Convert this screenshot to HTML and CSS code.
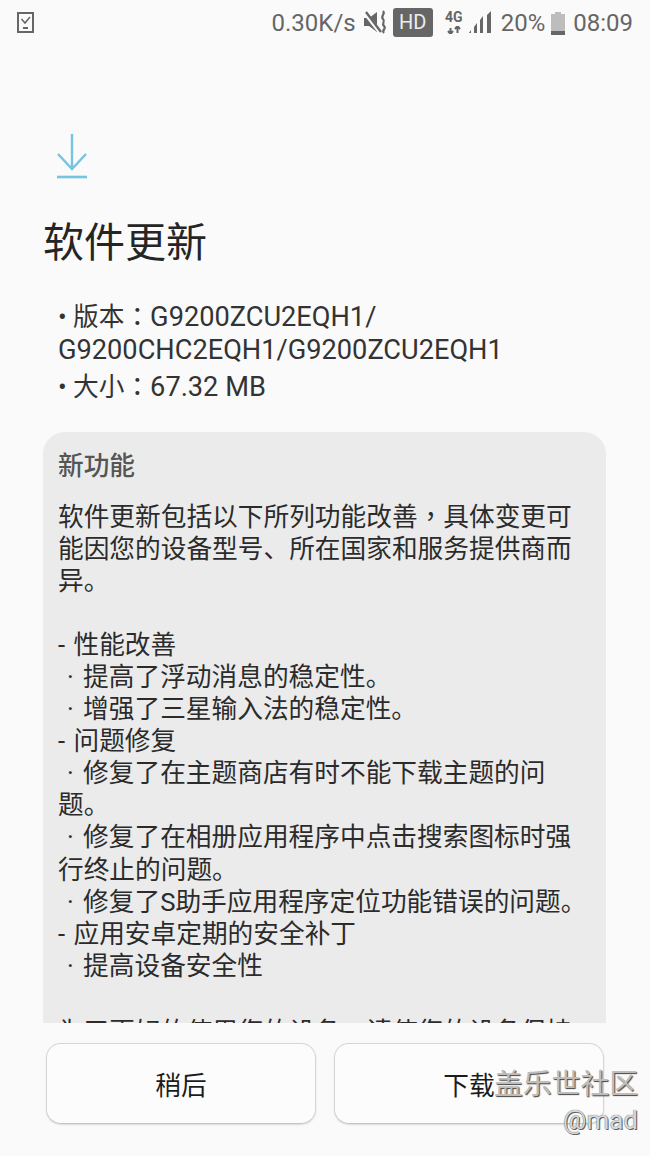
FILE: index.html
```html
<!DOCTYPE html>
<html lang="zh-CN">
<head>
<meta charset="utf-8">
<title>软件更新</title>
<link rel="stylesheet" href="styles.css">
</head>
<body>
<div class="screen">
  <header class="status">
    <svg class="st-left" width="18" height="22" viewBox="0 0 18 22"><rect x="1" y="1" width="15" height="19" fill="none" stroke="#666" stroke-width="2"/><path d="M4.500 7l3.500 4 5-6" fill="none" stroke="#666" stroke-width="1.500"/><rect x="6" y="15" width="5" height="2" fill="#666"/></svg>
    <div class="st-right">
      <span class="st-text speed">0.30K/s</span>
      <svg class="mute" width="24" height="25" viewBox="0 0 24 25"><path d="M0 8h5l8-6v20l-8-6H0z" fill="#666"/><path d="M1 3l14 18" stroke="#fafafa" stroke-width="4"/><path d="M2 2l15 20" stroke="#666" stroke-width="2.400"/><path d="M19 1c3 3-3 5 0 8s-2 4 1 7-3 4 0 7" fill="none" stroke="#666" stroke-width="2.200"/></svg>
      <span class="hd">HD</span>
      <span class="net"><span class="net-t">4G</span><svg width="14" height="8" viewBox="0 0 14 8"><path d="M3.500 8V2M1 5l2.500 3L6 5M10.500 0v7M8 3l2.500-3L13 3" fill="none" stroke="#666" stroke-width="2"/></svg></span>
      <svg class="signal" width="24" height="25" viewBox="0 0 24 25"><path d="M0 23l2-3v3zM5 23v-6l3-4v10zM11 23V10l3-4v17zM18 23V5l4-4v22z" fill="#666"/></svg>
      <span class="st-text pct">20%</span>
      <svg class="batt" width="14" height="24" viewBox="0 0 14 24"><path d="M4 1h6v2h4v21H0V3h4z" fill="#bdbdbd"/><rect y="20" width="14" height="4" fill="#666"/></svg>
      <span class="st-text time">08:09</span>
    </div>
  </header>

  <main class="content">
    <svg class="dl" width="32" height="48" viewBox="0 0 32 48"><path d="M16 1v35M2 21l14 15 14-15" fill="none" stroke="#74c4e2" stroke-width="2.400"/><path d="M1 44h30" stroke="#74c4e2" stroke-width="2.600"/></svg>
    <h1 class="title">软件更新</h1>
    <div class="info">
      <div>• 版本<span class="ctr" lang="zh-TW">：</span><span class="lat">G9200ZCU2EQH1/</span></div>
      <div class="lat">G9200CHC2EQH1/G9200ZCU2EQH1</div>
      <div class="info-size">• 大小<span class="ctr" lang="zh-TW">：</span><span class="lat">67.32 MB</span></div>
    </div>
    <section class="panel">
      <h2 class="panel-title">新功能</h2>
      <div class="panel-body">
        <div>软件更新包括以下所列功能改善<span class="ctr" lang="zh-TW">，</span>具体变更可</div>
        <div>能因您的设备型号、所在国家和服务提供商而</div>
        <div>异。</div>
        <div class="blank"></div>
        <div>- 性能改善</div>
        <div class="sub">· 提高了浮动消息的稳定性。</div>
        <div class="sub">· 增强了三星输入法的稳定性。</div>
        <div>- 问题修复</div>
        <div class="sub">· 修复了在主题商店有时不能下载主题的问</div>
        <div>题。</div>
        <div class="sub">· 修复了在相册应用程序中点击搜索图标时强</div>
        <div>行终止的问题。</div>
        <div class="sub">· 修复了S助手应用程序定位功能错误的问题。</div>
        <div>- 应用安卓定期的安全补丁</div>
        <div class="sub">· 提高设备安全性</div>
        <div class="blank"></div>
        <div>为了更好的使用您的设备<span class="ctr" lang="zh-TW">，</span>请使您的设备保持</div>
      </div>
    </section>
  </main>

  <footer class="actions">
    <button class="btn">稍后</button>
    <button class="btn">下载</button>
  </footer>

  <div class="mark">
    <div class="mark-cn">盖乐世社区</div>
    <div class="mark-at">@mad</div>
  </div>
</div>
</body>
</html>
```

FILE: styles.css
```css
* { box-sizing: border-box; }
html, body { margin: 0; padding: 0; }
body {
  width: 650px;
  height: 1156px;
  overflow: hidden;
  background: #fafafa;
  font-family: "Roboto", "Noto Sans CJK SC", sans-serif;
  color: #252525;
}
.screen {
  position: relative;
  width: 650px;
  height: 1156px;
  display: flex;
  flex-direction: column;
}
.ctr { font-family: "Noto Sans CJK TC", sans-serif; }
.lat { font-size: 27.200px; }
.status {
  height: 46px;
  flex: none;
  display: flex;
  align-items: center;
  justify-content: space-between;
  padding: 0 17px 1px 17px;
}
.st-right { display: flex; align-items: center; }
.st-text {
  font-family: "Roboto", sans-serif;
  font-size: 24px;
  color: #666;
  line-height: 30px;
}
.mute { margin-left: 8px; }
.hd {
  margin-left: 5px;
  width: 40px;
  height: 29px;
  background: #666;
  color: #ededed;
  border-radius: 3px;
  font-family: "Roboto", sans-serif;
  font-size: 20px;
  line-height: 29px;
  text-align: center;
}
.net {
  margin-left: 12px;
  width: 18px;
  display: flex;
  flex-direction: column;
  align-items: center;
  gap: 2px;
}
.net-t {
  font-family: "Roboto", sans-serif;
  font-size: 14px;
  font-weight: 700;
  line-height: 13px;
  color: #666;
}
.signal { margin-left: 6px; }
.pct { margin-left: 8px; }
.batt { margin-left: 6px; }
.time { margin-left: 8px; }

.content {
  flex: 1 1 0;
  min-height: 0;
  overflow: hidden;
  padding: 87px 44px 0 43px;
}
.dl { display: block; margin-left: 13px; height: 48px; }
.title {
  margin: 32px 0 0 0;
  font-size: 41px;
  font-weight: 400;
  line-height: 60px;
  color: #252525;
}
.info {
  margin: 26px 0 0 15px;
  font-size: 25.700px;
  line-height: 32.500px;
  color: #333;
}
.info-size { margin-top: 3px; }
.panel {
  margin-top: 28px;
  height: 592px;
  overflow: hidden;
  background: #ebebeb;
  border-radius: 22px 22px 0 0;
  padding: 17px 15px 0;
}
.panel-title {
  margin: 0;
  font-size: 25.700px;
  font-weight: 500;
  line-height: 34px;
  color: #555;
}
.panel-body {
  margin-top: 16px;
  font-size: 25.700px;
  line-height: 32.100px;
  color: #2b2b2b;
  white-space: nowrap;
  word-spacing: 2px;
}
.sub { padding-left: 9px; word-spacing: 3px; }
.blank { height: 32.100px; }

.actions {
  flex: none;
  height: 133px;
  display: flex;
  gap: 18px;
  padding: 20px 46px 0;
}
.btn {
  flex: 1 1 0;
  height: 81px;
  background: #fcfcfc;
  border: 1px solid #d6d6d6;
  border-bottom-color: #c4c4c4;
  border-radius: 15px;
  box-shadow: 0 1px 2px rgba(0, 0, 0, 0.12);
  font-family: inherit;
  font-size: 25.700px;
  color: #1c1c1c;
  padding: 0;
}
.mark {
  position: absolute;
  right: 12px;
  top: 1064px;
  text-align: right;
}
.mark-cn {
  font-size: 28.800px;
  line-height: 40px;
  color: #bdbdbd;
  text-shadow: 1px 1px 1px #444;
}
.mark-at {
  margin-top: 0;
  font-family: "Roboto", sans-serif;
  font-size: 26px;
  line-height: 32px;
  color: #d8d8d8;
  text-shadow: 0 0 1px #444, 1px 1px 0 #666;
}
```
